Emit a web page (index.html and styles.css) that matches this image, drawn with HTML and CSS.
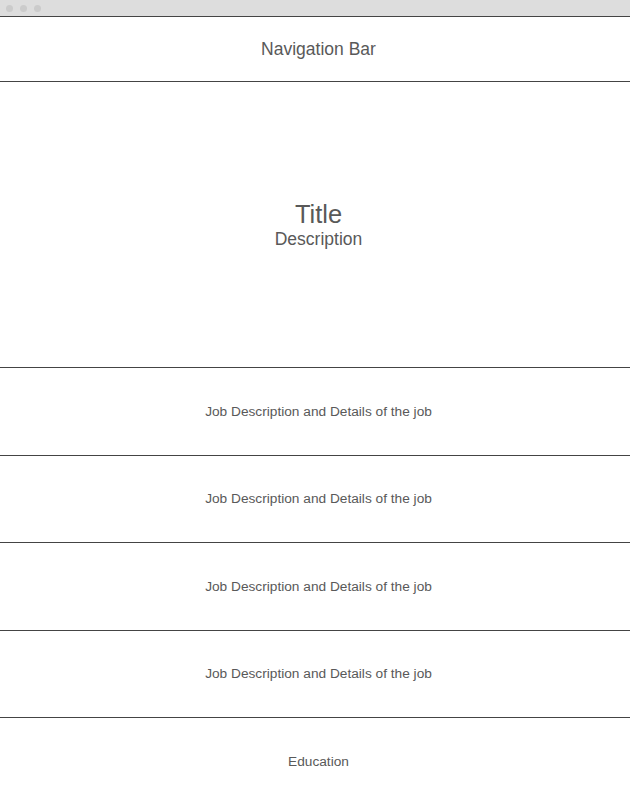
FILE: index.html
```html
<!DOCTYPE html>
<html>
<head>
<meta charset="utf-8">
<link rel="stylesheet" href="styles.css">
</head>
<body>
<div class="chrome">
  <span class="dot"></span><span class="dot"></span><span class="dot"></span>
</div>
<div class="nav">Navigation Bar</div>
<div class="hero">
  <div class="title">Title</div>
  <div class="desc">Description</div>
</div>
<div class="row">Job Description and Details of the job</div>
<div class="row">Job Description and Details of the job</div>
<div class="row">Job Description and Details of the job</div>
<div class="row">Job Description and Details of the job</div>
<div class="edu">Education</div>
</body>
</html>
```
FILE: styles.css
```css
html, body {
  margin: 0;
  padding: 0;
  background: #fff;
  font-family: "Liberation Sans", Arial, sans-serif;
  color: #595959;
}
.chrome {
  height: 16px;
  background: #dddddd;
  border-bottom: 1px solid #444;
  display: flex;
  align-items: center;
  gap: 7px;
  padding-left: 6px;
}
.dot {
  width: 7px;
  height: 7px;
  border-radius: 50%;
  background: #cbcbcb;
}
.nav,
.hero,
.row,
.edu {
  box-sizing: border-box;
  padding-left: 7px;
}
.nav {
  height: 65px;
  border-bottom: 1px solid #444;
  display: flex;
  align-items: center;
  justify-content: center;
  font-size: 17.5px;
}
.hero {
  height: 286px;
  border-bottom: 1px solid #444;
  display: flex;
  flex-direction: column;
  align-items: center;
  justify-content: center;
  padding-bottom: 2px;
}
.title {
  font-size: 25.5px;
  line-height: 30px;
}
.desc {
  font-size: 17.5px;
  line-height: 20px;
}
.row {
  height: 87.5px;
  border-bottom: 1px solid #444;
  display: flex;
  align-items: center;
  justify-content: center;
  font-size: 13.7px;
}
.edu {
  height: 86px;
  display: flex;
  align-items: center;
  justify-content: center;
  font-size: 13.7px;
}
```
